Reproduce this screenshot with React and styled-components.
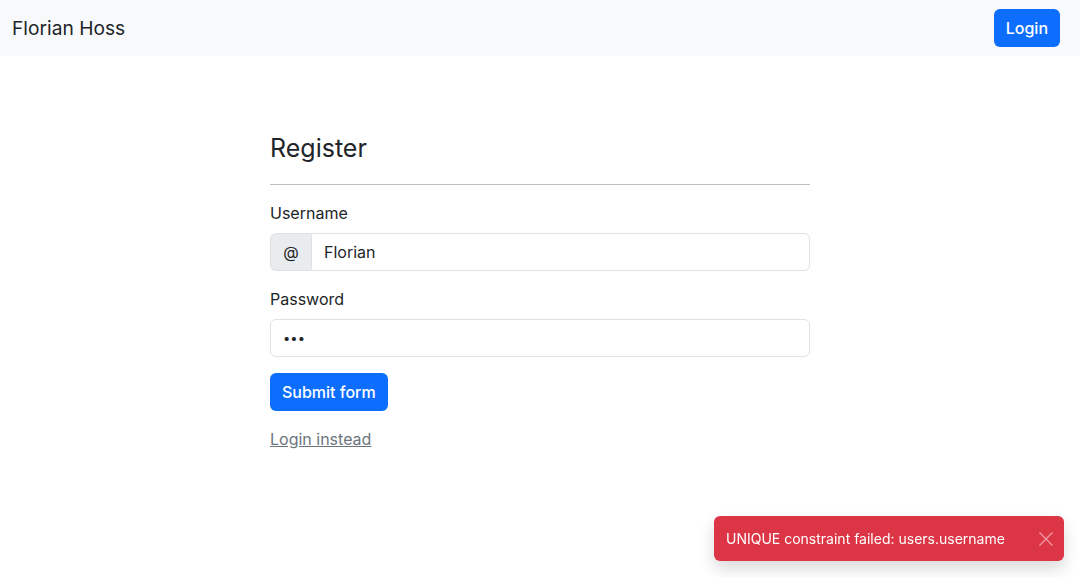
import styled, { createGlobalStyle } from "styled-components";

const GlobalStyle = createGlobalStyle`
  body {
    margin: 0;
    font-family: Inter, "Liberation Sans", sans-serif;
    color: #212529;
    background: #fff;
  }
  * { box-sizing: border-box; }
`;

export default function App() {
  return (
    <>
      <GlobalStyle />
      <Navbar>
        <Brand>Florian Hoss</Brand>
        <PrimaryButton>Login</PrimaryButton>
      </Navbar>
      <Main>
        <Heading>Register</Heading>
        <Divider />
        <Field>
          <Label>Username</Label>
          <InputGroup>
            <Addon>@</Addon>
            <Input type="text" defaultValue="Florian" grouped />
          </InputGroup>
        </Field>
        <Field>
          <Label>Password</Label>
          <Input type="password" defaultValue="abc" small />
        </Field>
        <PrimaryButton>Submit form</PrimaryButton>
        <SecondaryLink href="#">Login instead</SecondaryLink>
      </Main>
      <Toast>
        <ToastText>UNIQUE constraint failed: users.username</ToastText>
        <CloseButton aria-label="Close">
          <svg width="16" height="16" viewBox="0 0 16 16">
            <path d="M1.5 1.5 L14.5 14.5 M14.5 1.5 L1.5 14.5" stroke="currentColor" strokeWidth="1.3" fill="none" />
          </svg>
        </CloseButton>
      </Toast>
    </>
  );
}

const Navbar = styled.nav`
  display: flex;
  align-items: center;
  justify-content: space-between;
  height: 56px;
  padding: 0 20px 0 12px;
  background-color: #f8f9fa;
`;

const Brand = styled.span`
  font-size: 19.2px;
  line-height: 30px;
  color: #212529;
`;

const PrimaryButton = styled.button`
  height: 38px;
  padding: 0 12px;
  border: none;
  border-radius: 6px;
  background-color: #0d6efd;
  color: #fff;
  font-family: inherit;
  font-size: 16px;
  font-weight: 500;
  cursor: pointer;
`;

const Main = styled.main`
  width: 540px;
  margin: 0 auto;
  padding-top: 77px;
  display: flex;
  flex-direction: column;
  align-items: flex-start;
`;

const Heading = styled.h3`
  margin: 0 0 8px;
  font-size: 25px;
  line-height: 31px;
  font-weight: 400;
`;

const Divider = styled.hr`
  width: 100%;
  margin: 12px 0 16px;
  border: 0;
  border-top: 1px solid #bfbfbf;
`;

const Field = styled.div`
  width: 100%;
  margin-bottom: 16px;
`;

const Label = styled.label`
  display: block;
  margin-bottom: 8px;
  font-size: 16px;
  line-height: 24px;
`;

const InputGroup = styled.div`
  display: flex;
  width: 100%;
`;

const Addon = styled.span`
  display: flex;
  align-items: center;
  justify-content: center;
  width: 41px;
  height: 38px;
  background-color: #e9ecef;
  border: 1px solid #dee2e6;
  border-right: none;
  border-radius: 6px 0 0 6px;
  font-size: 16px;
`;

const Input = styled.input`
  flex: 1;
  width: 100%;
  height: 38px;
  padding: 0 12px;
  border: 1px solid #dee2e6;
  border-radius: ${(p) => (p.grouped ? "0 6px 6px 0" : "6px")};
  font-family: inherit;
  font-size: ${(p) => (p.small ? "13px" : "16px")};
  color: #212529;
  outline: none;
`;

const SecondaryLink = styled.a`
  margin-top: 16px;
  font-size: 16px;
  line-height: 24px;
  color: #6c757d;
  text-decoration: underline;
`;

const Toast = styled.div`
  position: fixed;
  right: 16px;
  bottom: 16px;
  width: 350px;
  height: 45px;
  display: flex;
  align-items: center;
  justify-content: space-between;
  padding: 0 10px 0 12px;
  background-color: #dc3545;
  border-radius: 6px;
  box-shadow: 0 8px 16px rgba(0, 0, 0, 0.15);
`;

const ToastText = styled.span`
  color: #fff;
  font-size: 14px;
`;

const CloseButton = styled.button`
  display: flex;
  padding: 0;
  border: none;
  background: transparent;
  color: rgba(255, 255, 255, 0.5);
`;
